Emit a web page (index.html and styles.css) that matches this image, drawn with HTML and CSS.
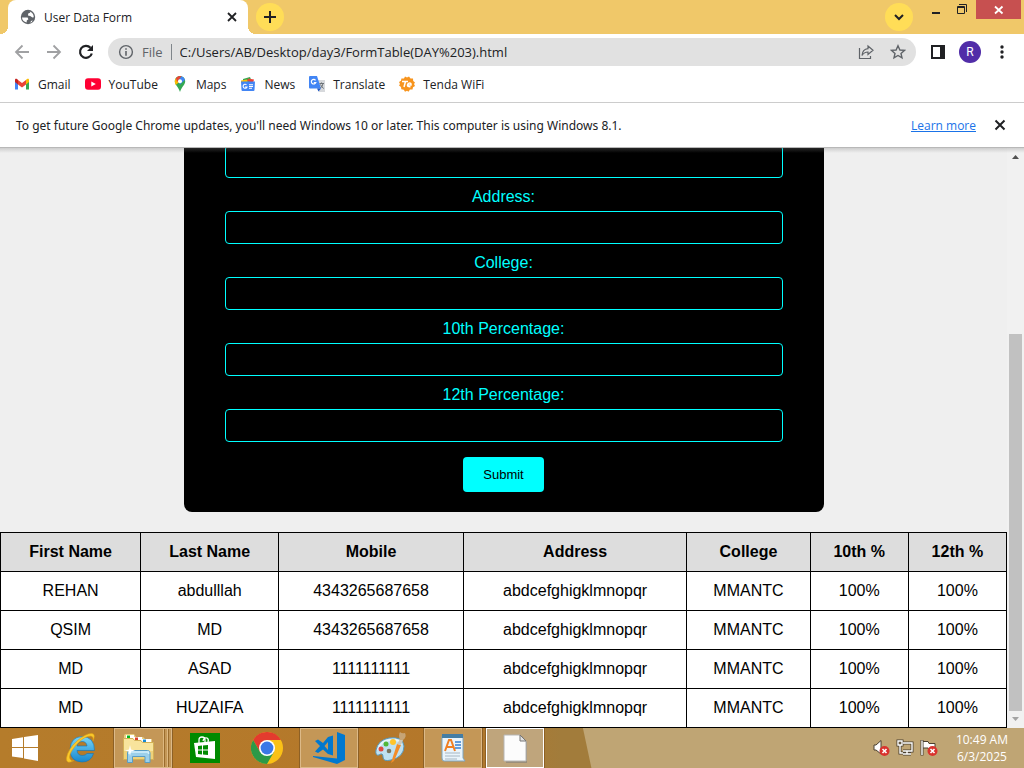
FILE: index.html
```html
<!DOCTYPE html>
<html lang="en">
<head>
<meta charset="utf-8">
<title>User Data Form</title>
<link rel="stylesheet" href="styles.css">
</head>
<body>
<div class="desktop">
  <header class="tabstrip">
    <div class="tab">
      <svg class="icon16" viewBox="0 0 16 16"><circle cx="8" cy="8" r="7.2" fill="#5f6368"/><path d="M2 8.6 7.6 8.4 8.4 10.2 6.8 11.4 6.6 13.4C4 13 2 11 2 8.6ZM8.6 2.4C10 2.4 10.6 3 10 3.8L8.2 4.6 8 6.4 10.2 7 12.4 8.6 13.8 8.2C13.8 5 11.6 2.4 8.6 2.4ZM9.8 13.4 12.4 11 12 13Z" fill="#fff"/></svg>
      <span class="tab-title">User Data Form</span>
      <button class="bare" type="button" aria-label="Close tab"><svg class="icon16" viewBox="0 0 16 16"><path d="M4 4 12 12M12 4 4 12" stroke="#202124" stroke-width="1.8"/></svg></button>
    </div>
    <button class="round" type="button" aria-label="New tab"><svg class="icon16" viewBox="0 0 16 16"><path d="M8 2V14M2 8H14" stroke="#202124" stroke-width="2"/></svg></button>
    <div class="window-controls">
      <button class="round tab-search" type="button" aria-label="Search tabs"><svg class="icon16" viewBox="0 0 16 16"><path d="M4 6 8 10 12 6" fill="none" stroke="#202124" stroke-width="2"/></svg></button>
      <button class="bare win" type="button" aria-label="Minimize"><svg width="12" height="12" viewBox="0 0 12 12"><path d="M2 9H10" stroke="#202124" stroke-width="2"/></svg></button>
      <button class="bare win" type="button" aria-label="Restore"><svg width="12" height="12" viewBox="0 0 12 12"><path d="M3 .5H10.500V8" fill="none" stroke="#202124"/><path d="M1.500 2.500H8.500V9.500H1.500ZM1.500 3.500H8.500" fill="none" stroke="#202124"/></svg></button>
      <button class="bare win-close" type="button" aria-label="Close"><svg width="12" height="12" viewBox="0 0 12 12"><path d="M2 2.500 9.500 9.500M9.500 2.500 2 9.500" stroke="#fff" stroke-width="1.800"/></svg></button>
    </div>
  </header>

  <div class="toolbar">
    <button class="bare" type="button" aria-label="Back"><svg class="icon16" viewBox="0 0 16 16"><path d="M15 8H2M8.500 1.500 2 8 8.500 14.500" fill="none" stroke="#a0a1a3" stroke-width="1.800"/></svg></button>
    <button class="bare" type="button" aria-label="Forward"><svg class="icon16" viewBox="0 0 16 16"><path d="M1 8H14M7.500 1.500 14 8 7.500 14.500" fill="none" stroke="#a0a1a3" stroke-width="1.800"/></svg></button>
    <button class="bare" type="button" aria-label="Reload"><svg class="icon16" viewBox="0 0 16 16"><path d="M13.800 9.500A6 6 0 1 1 12.500 3.800" fill="none" stroke="#202124" stroke-width="2.200"/><path d="M15 1V7H9Z" fill="#202124"/></svg></button>
    <div class="omnibox">
      <svg class="icon16" viewBox="0 0 16 16"><circle cx="8" cy="8" r="6.400" fill="none" stroke="#5f6368" stroke-width="1.400"/><path d="M8 7V11.800M8 4.200V5.800" stroke="#5f6368" stroke-width="1.600"/></svg>
      <span class="scheme">File</span>
      <input class="url" type="text" aria-label="Address and search bar" value="C:/Users/AB/Desktop/day3/FormTable(DAY%203).html">
      <button class="bare" type="button" aria-label="Share"><svg class="icon16" viewBox="0 0 16 16"><path d="M1.500 4V14.500H12.500V12" fill="none" stroke="#5f6368" stroke-width="1.200"/><path d="M10 2 15 6.300 10 10.500V8C7.500 8 5.500 9 4 11.500 4.300 7.500 6 5 10 4.600Z" fill="none" stroke="#5f6368" stroke-width="1.200"/></svg></button>
      <button class="bare" type="button" aria-label="Bookmark"><svg class="icon16" viewBox="0 0 16 16"><path d="M8 1.800 9.900 6 14.400 6.400 11 9.400 12 13.900 8 11.500 4 13.900 5 9.400 1.600 6.400 6.100 6Z" fill="none" stroke="#5f6368" stroke-width="1.400"/></svg></button>
    </div>
    <div class="toolbar-end">
      <button class="bare" type="button" aria-label="Side panel"><svg class="icon16" viewBox="0 0 16 16"><path d="M1 1H15V15H1Z" fill="#202124"/><path d="M3 3H10V13H3Z" fill="#fff"/></svg></button>
      <button class="avatar" type="button">R</button>
      <button class="bare" type="button" aria-label="Menu"><svg class="icon16" viewBox="0 0 16 16"><g fill="#202124"><circle cx="8" cy="3" r="1.700"/><circle cx="8" cy="8" r="1.700"/><circle cx="8" cy="13" r="1.700"/></g></svg></button>
    </div>
  </div>

  <nav class="bookmarks">
    <a href="#"><svg class="icon16" viewBox="0 0 16 16"><path d="M1 3.500V13.500H4V6.500Z" fill="#4285f4"/><path d="M15 3.500V13.500H12V6.500Z" fill="#34a853"/><path d="M12 3.800 14 2.500Q15.300 3 15 4.500V6L12 8.400Z" fill="#fbbc04"/><path d="M4 3.800 2 2.500Q.700 3 1 4.500V6L4 8.400Z" fill="#c5221f"/><path d="M4 4 8 7 12 4V8.400L8 11.500 4 8.400Z" fill="#ea4335"/></svg>Gmail</a>
    <a href="#"><svg class="icon16" viewBox="0 0 16 16"><rect y="2.300" width="16" height="11.500" rx="3" fill="#ff0033"/><path d="M6.300 5.500V10.600L10.800 8Z" fill="#fff"/></svg>YouTube</a>
    <a href="#"><svg class="icon16" viewBox="0 0 16 16"><path d="M8 0C11 0 13.200 2.400 13.200 5.300 13.200 9 9.500 11 8 16 6.500 11 2.800 9 2.800 5.300 2.800 2.400 5 0 8 0Z" fill="#34a853"/><path d="M4.200 2 8 5.300 3.800 9Q2.700 7 2.800 5.300 2.800 3.500 4.200 2Z" fill="#fbbc04"/><path d="M4 1.900Q5.500 0 8 0L9.700.300 5 6Z" fill="#ea4335"/><path d="M9.500.200Q12 1 13 3.700L8 8.500 6 5Z" fill="#4285f4"/><circle cx="8" cy="5.300" r="2" fill="#fff"/></svg>Maps</a>
    <a href="#"><svg class="icon16" viewBox="0 0 16 16"><path d="M3 3 10 1 12 6H3Z" fill="#34a853"/><path d="M8 2.500 14 3.500 13 7 7 5Z" fill="#ea4335"/><path d="M1 4.500 7 3.500 8 7H1Z" fill="#fbbc04"/><path d="M1 5.500H15L14.500 14Q14.500 15 13.500 15H2.500Q1.500 15 1.500 14Z" fill="#4285f4"/><path d="M6.500 8.800A2 2 0 1 0 7 11H5M9 8.800H13M9 10.500H13M9 12.300H12" fill="none" stroke="#fff" stroke-width="1.100"/></svg>News</a>
    <a href="#"><svg class="icon16" viewBox="0 0 16 16"><path d="M6 4H16V16H10Z" fill="#d7d9dc"/><path d="M1 0H8L12 12.500H1Q0 12.500 0 11.500V1Q0 0 1 0Z" fill="#4285f4"/><path d="M8 12.500H12L9.500 15.500Z" fill="#1f57c4"/><path d="M6.500 4.300A2.300 2.300 0 1 0 6.800 6.500H4.800" fill="none" stroke="#fff" stroke-width="1.200"/><path d="M10.500 7.500H15M12.500 6.500V7.500M14 7.500Q13.500 10.500 11.500 12M11.500 8.500Q12.500 11 14.800 12.500" fill="none" stroke="#6b7177"/></svg>Translate</a>
    <a href="#"><svg class="icon16" viewBox="0 0 16 16"><path d="M6 .500 8 1.500 10 .500 11.500 2.500 14 2.500 14.200 5 16 6.500 15 8 16 10 14 11.300 13.500 13.500 11 13.500 9.500 15.800 8 14.800 6 15.800 4.800 13.700 2.300 13.300 2 11 0 9.500 1 8 0 6 2 4.800 2.400 2.500 5 2.500Z" fill="#f7941d"/><path d="M3 5.500H9M6.500 5.500 5 11M8.500 9H12Q12.300 7 10.600 7 8.800 7 8.500 9 8.300 11 11.500 10.800" fill="none" stroke="#fff" stroke-width="1.500"/></svg>Tenda WiFi</a>
  </nav>

  <aside class="infobar">
    <p>To get future Google Chrome updates, you'll need Windows 10 or later. This computer is using Windows 8.1.</p>
    <a href="#">Learn more</a>
    <button class="bare" type="button" aria-label="Dismiss"><svg class="icon16" viewBox="0 0 16 16"><path d="M3.500 3.500 12.500 12.500M12.500 3.500 3.500 12.500" stroke="#202124" stroke-width="2"/></svg></button>
  </aside>

  <div class="viewport">
    <main class="page">
      <form class="data-form">
        <input type="text" aria-label="Mobile">
        <label for="address">Address:</label>
        <input id="address" type="text">
        <label for="college">College:</label>
        <input id="college" type="text">
        <label for="tenth">10th Percentage:</label>
        <input id="tenth" type="text">
        <label for="twelfth">12th Percentage:</label>
        <input id="twelfth" type="text">
        <button class="submit" type="submit">Submit</button>
      </form>
      <table class="records">
        <thead>
          <tr><th>First Name</th><th>Last Name</th><th>Mobile</th><th>Address</th><th>College</th><th>10th %</th><th>12th %</th></tr>
        </thead>
        <tbody>
          <tr><td>REHAN</td><td>abdulllah</td><td>4343265687658</td><td>abdcefghigklmnopqr</td><td>MMANTC</td><td>100%</td><td>100%</td></tr>
          <tr><td>QSIM</td><td>MD</td><td>4343265687658</td><td>abdcefghigklmnopqr</td><td>MMANTC</td><td>100%</td><td>100%</td></tr>
          <tr><td>MD</td><td>ASAD</td><td>1111111111</td><td>abdcefghigklmnopqr</td><td>MMANTC</td><td>100%</td><td>100%</td></tr>
          <tr><td>MD</td><td>HUZAIFA</td><td>1111111111</td><td>abdcefghigklmnopqr</td><td>MMANTC</td><td>100%</td><td>100%</td></tr>
        </tbody>
      </table>
    </main>
    <div class="scrollbar">
      <svg width="17" height="17" viewBox="0 0 17 17"><path d="M5 11H12L8.500 7Z" fill="#505050"/></svg>
      <div class="track"><div class="thumb"></div></div>
      <svg width="17" height="17" viewBox="0 0 17 17"><path d="M5 6H12L8.500 10Z" fill="#a3a3a3"/></svg>
    </div>
  </div>

  <footer class="taskbar">
    <button class="start" type="button" aria-label="Start"><svg width="28" height="28" viewBox="0 0 28 28"><path d="M1 5 12 3.300V13H1ZM13 3.100 27 1V13H13ZM1 14H12V24L1 22.400ZM13 14H27V27L13 24.600Z" fill="#fff"/></svg></button>
    <button class="task" type="button" aria-label="Internet Explorer"><svg width="32" height="32" viewBox="0 0 32 32"><defs><linearGradient id="ie" x2="0" y2="1"><stop stop-color="#79d5f7"/><stop offset="1" stop-color="#1787ce"/></linearGradient></defs><path fill-rule="evenodd" d="M29.500 18.500H12Q12.500 23.500 17.500 23.500 20.500 23.500 22 21.500H28.500Q26 30 17 30 5 29.500 5 17.500 5.500 5 17 4.500 29.500 5 29.500 18.500ZM12 14H22Q21.500 9.500 17 9.500 12.700 9.700 12 14Z" fill="url(#ie)" stroke="#1374b5" stroke-width=".600"/><path d="M9 28.500Q1 33 1.500 26 3 17 12 9 21 1 27 1.500 31 2 28 9 29 4.500 26 4 20 4 13 11 4.500 20 4.500 25 5 29.500 9 28.500Z" fill="#fbc92b" stroke="#dc9f14" stroke-width=".600"/></svg></button>
    <button class="task open stacked" type="button" aria-label="File Explorer"><svg width="34" height="32" viewBox="0 0 34 32"><path d="M2 4Q2 2 4 2H12L14 5H21L23 7H30V14H2Z" fill="#e9cf80"/><path d="M4 3H12V7H4Z" fill="#fff"/><path d="M5 3.500H8V6H5Z" fill="#08b51c"/><path d="M12 5H20V9H12Z" fill="#fff"/><path d="M13 5.500H16V8H13Z" fill="#dd432c"/><path d="M20 7H29V11H20Z" fill="#fff"/><path d="M21 7.500H24V10H21Z" fill="#168bd3"/><path d="M1.500 6.500H11L12.500 8.500H19L20.500 10.500H31.500V27.500H1.500Z" fill="#f8e49c" stroke="#d3b055"/><path d="M2 19H31V27H2Z" fill="#efd27a"/><path d="M5.500 30.500V21Q5.500 18.500 8 18.500H25.500Q28 18.500 28 21V30.500H23V24.500H10.500V30.500Z" fill="#9cd0ea" stroke="#5a9dc4"/><path d="M7 22V20H26.500V22" fill="none" stroke="#d3effb" stroke-width="1.500"/><path d="M8 13 9 17.500 13 18.500 9 19.500 8 24 7 19.500 3 18.500 7 17.500Z" fill="#fff"/></svg></button>
    <button class="task" type="button" aria-label="Store"><svg width="30" height="30" viewBox="0 0 30 30"><path d="M0 0H30V30H0Z" fill="#008a00"/><path d="M9 10V7Q9 4 12 4 15 4 15 7V9M13 8Q14 4 17 5 19 6 18 9" fill="none" stroke="#fff" stroke-width="1.300"/><path d="M4 10 25 8V26L6 24Z" fill="#fff"/><path d="M8 13 12 12.500V16.500H8ZM13 12.400 18 12V16.500H13ZM8 17.500H12V21.500L8 21ZM13 17.500H18V22L13 21.500Z" fill="#008a00"/></svg></button>
    <button class="task" type="button" aria-label="Google Chrome"><svg width="32" height="32" viewBox="0 0 32 32"><circle cx="16" cy="16" r="16" fill="#fbc116"/><path d="M2.140 8A16 16 0 0 1 29.860 8H16L9.070 20Z" fill="#e33b2e"/><path d="M2.140 8A16 16 0 0 0 16 32L22.930 20H16L9.070 20Z" fill="#2c9948"/><circle cx="16" cy="16" r="8" fill="#fff"/><circle cx="16" cy="16" r="6.400" fill="#3b78e7"/></svg></button>
    <button class="task open" type="button" aria-label="Visual Studio Code"><svg width="32" height="32" viewBox="0 0 32 32"><path d="M24 0 32 3V28L24 32 0 25V24L24 26.500Z" fill="#0078cf"/><path fill-rule="evenodd" d="M15 5 20 3.500V23.500L15 22 10 17.500 5 21 2 19.500 7 14 2 9 5 7.500 10 11ZM15 10 11.500 14 15 18Z" fill="#0078cf"/></svg></button>
    <button class="task" type="button" aria-label="Paint"><svg width="32" height="32" viewBox="0 0 32 32"><path d="M14 6Q28 4 29 14 29 25 16 28 8 30 8 25 8 20 4 23 0 24 1 18 3 8 14 6Z" fill="#bfe1f1" stroke="#5997b8"/><path d="M3 18Q5 9 15 8 25 7 26 13" fill="none" stroke="#e6f5fb" stroke-width="2"/><circle cx="14" cy="19" r="2.300" fill="#78745f"/><circle cx="6" cy="17" r="2.500" fill="#e24a40"/><circle cx="11" cy="12" r="2.500" fill="#51b83a"/><circle cx="18" cy="10" r="3" fill="#ffc42b"/><path d="M22 12 26 13 19 29 16 31Z" fill="#f28c28"/><path d="M22 12 25 7 28 8 26 13Z" fill="#cac8bd"/><path d="M25 8Q23 3 25 0 27 2 30 1 32 5 28 8Z" fill="#c6a476"/></svg></button>
    <button class="task open" type="button" aria-label="WordPad"><svg width="26" height="30" viewBox="0 0 26 30"><path d="M2 3H23V25L25 28H4Q2 28 2 25Z" fill="#eaf4fb" stroke="#7ca6c2"/><path d="M2 1H23V5H2Z" fill="#447da4"/><path d="M5 18 9 7H11L15 18M7 14H13" fill="none" stroke="#f07f22" stroke-width="2"/><path d="M15 9H21M15 12H21M15 15H21" stroke="#377fd0" stroke-width="1.500"/><path d="M5 20H20M5 23H20M5 26H17" stroke="#a6b6c3"/></svg></button>
    <button class="task open active" type="button" aria-label="Document"><svg width="26" height="30" viewBox="0 0 26 30"><path d="M4 3H20L25 9V30H4Z" fill="#777" opacity=".500"/><path d="M2 2H18L24 8V28H2Z" fill="#fcfcfc" stroke="#b5b5b5"/><path d="M18 2V8H24Z" fill="#e0e0e0" stroke="#777"/></svg></button>
    <div class="tray">
      <svg width="18" height="18" viewBox="0 0 18 18"><path d="M2 6H4L9 1.500V15L4 11H2Z" fill="#fff" stroke="#4b4030"/><circle cx="12.500" cy="12" r="5" fill="#d9332e"/><path d="M10.500 10 14.500 14M14.500 10 10.500 14" stroke="#fff" stroke-width="1.600"/></svg>
      <svg width="18" height="18" viewBox="0 0 18 18"><path d="M7 4H16V12H7M11 12V15M7 15H15M2 2H6V6H2ZM4 6V14H7" fill="none" stroke="#4b4030" stroke-width="3"/><path d="M7 4H16V12H7M11 12V15M7 15H15M2 2H6V6H2ZM4 6V14H7" fill="none" stroke="#fff" stroke-width="1.400"/></svg>
      <svg width="18" height="18" viewBox="0 0 18 18"><path d="M2 1V16.500" stroke="#4b4030" stroke-width="3"/><path d="M3 2.500H8L9 4.500H15V11H9L8 9H3Z" fill="#fff" stroke="#4b4030"/><path d="M2 1.500V16" stroke="#fff" stroke-width="1.400"/><circle cx="12.500" cy="12" r="5" fill="#d9332e"/><path d="M10.500 10 14.500 14M14.500 10 10.500 14" stroke="#fff" stroke-width="1.600"/></svg>
      <div class="clock"><span>10:49 AM</span><span>6/3/2025</span></div>
    </div>
  </footer>
</div>
</body>
</html>
```

FILE: styles.css
```css
* { box-sizing: border-box; }

body {
  margin: 0;
  font-family: "Open Sans", "Noto Sans", sans-serif;
  font-size: 12px;
  color: #202124;
}

button, input { font: inherit; color: inherit; }

svg { display: block; flex: none; }

.icon16 { width: 16px; height: 16px; }

.desktop {
  display: flex;
  flex-direction: column;
  height: 100vh;
  overflow: hidden;
  background: #fff;
}

.bare {
  display: flex;
  align-items: center;
  justify-content: center;
  padding: 0;
  border: 0;
  background: none;
}

/* Tab strip */
.tabstrip {
  display: flex;
  flex: none;
  height: 34px;
  padding-left: 8px;
  background: #f0c869;
}

.tab {
  position: relative;
  display: flex;
  align-items: center;
  width: 240px;
  padding: 0 8px 0 12px;
  border-radius: 8px 8px 0 0;
  background: #fff;
}

.tab::before, .tab::after {
  content: "";
  position: absolute;
  bottom: 0;
  width: 8px;
  height: 8px;
}

.tab::before {
  right: 100%;
  background: radial-gradient(circle at 0 0, transparent 8px, #fff 8px);
}

.tab::after {
  left: 100%;
  background: radial-gradient(circle at 100% 0, transparent 8px, #fff 8px);
}

.tab-title { flex: 1; padding-left: 8px; }

.round {
  display: flex;
  align-items: center;
  justify-content: center;
  width: 28px;
  height: 28px;
  margin: 3px 0 0 8px;
  padding: 0;
  border: 0;
  border-radius: 50%;
  background: #ffdd57;
}

.window-controls {
  display: flex;
  align-items: flex-start;
  margin-left: auto;
  padding-right: 3px;
}

.tab-search { margin-right: 10px; }

.win { width: 26px; height: 19px; }

.win-close {
  width: 45px;
  height: 19px;
  margin-left: 1px;
  background: #c75050;
}

/* Toolbar */
.toolbar {
  display: flex;
  flex: none;
  align-items: center;
  gap: 16px;
  height: 36px;
  padding: 0 14px;
}

.omnibox {
  display: flex;
  flex: 1;
  align-items: center;
  gap: 16px;
  height: 28px;
  margin: 0 -2px;
  padding: 0 10px;
  border-radius: 14px;
  background: #e1e1e1;
}

.scheme {
  margin-left: -8px;
  padding-right: 8px;
  border-right: 1px solid #80868b;
  color: #5f6368;
  font-size: 13px;
  line-height: 16px;
}

.url {
  flex: 1;
  min-width: 0;
  margin-left: -8px;
  padding: 0;
  border: 0;
  background: none;
  font-size: 13px;
}

.toolbar-end { display: flex; align-items: center; gap: 13px; }

.avatar {
  width: 22px;
  height: 22px;
  padding: 0;
  border: 0;
  border-radius: 50%;
  background: #512da8;
  color: #fff;
  font-family: Roboto, sans-serif;
}

/* Bookmarks */
.bookmarks {
  display: flex;
  flex: none;
  align-items: center;
  gap: 14px;
  height: 33px;
  padding: 0 14px 4px;
  border-bottom: 1px solid #ccc;
}

.bookmarks a {
  display: flex;
  align-items: center;
  gap: 8px;
  color: inherit;
  text-decoration: none;
}

/* Update notice */
.infobar {
  display: flex;
  flex: none;
  align-items: center;
  gap: 16px;
  height: 45px;
  padding: 0 16px;
  border-bottom: 1px solid #b8b8b8;
}

.infobar p {
  flex: 1;
  margin: 0;
  font-family: "Noto Sans", "Open Sans", sans-serif;
}

.infobar a { color: #1a73e8; }

/* Web page */
.viewport {
  position: relative;
  display: flex;
  flex: 1;
  min-height: 0;
  overflow: hidden;
  background: #efefef;
}

.viewport::before {
  content: "";
  position: absolute;
  inset: 0 0 auto;
  height: 5px;
  background: linear-gradient(rgba(128, 128, 128, 0.3), transparent);
}

.page {
  display: flex;
  flex: 1;
  flex-direction: column;
  align-items: center;
  justify-content: flex-end;
  gap: 20px;
  font-family: "Liberation Sans", Arial, sans-serif;
  font-size: 16px;
  color: #000;
}

.data-form {
  display: flex;
  flex-direction: column;
  width: 100%;
  max-width: 640px;
  padding: 20px 41px;
  border-radius: 8px;
  background: #000;
  color: #0ff;
  text-align: center;
}

.data-form label { padding: 10px 0 5px; line-height: 18px; }

.data-form input {
  height: 33px;
  padding: 8px;
  border: 1px solid #0ff;
  border-radius: 4px;
  background: #000;
  font-size: 13px;
}

.submit {
  align-self: center;
  margin-top: 15px;
  padding: 10px 20px;
  border: 0;
  border-radius: 4px;
  background: #0ff;
  color: #000;
  font-size: 13px;
}

.records {
  width: 100%;
  border-collapse: collapse;
  background: #fff;
  text-align: center;
  line-height: 18px;
}

.records th, .records td { padding: 10px; border: 1px solid #000; }

.records th { background: #ddd; }

/* Scrollbar */
.scrollbar {
  display: flex;
  flex: none;
  flex-direction: column;
  width: 17px;
  background: #f1f1f1;
}

.track {
  display: flex;
  flex: 1;
  align-items: flex-end;
  padding: 0 2px;
}

.thumb { flex: 1; height: 69%; background: #c1c1c1; }

/* Taskbar */
.taskbar {
  display: flex;
  flex: none;
  gap: 4px;
  height: 40px;
  background:
    linear-gradient(78deg, transparent 578px, #bfa574 579px),
    linear-gradient(90deg, #b57c2b, #b4772a 460px, #a27c3b 560px);
}

.start, .task {
  display: flex;
  align-items: center;
  justify-content: center;
  padding: 0;
  border: 1px solid transparent;
  background: none;
}

.start { width: 48px; padding-left: 2px; }

.task { width: 58px; }

.open {
  border-color: #dcb988;
  outline: 1px solid #8d6025;
  background: #c49757;
}

.stacked {
  padding-right: 8px;
  background: linear-gradient(90deg, #c49757 48px, #deb880 48px 49px, #9b6c2d 49px 50px, #c49757 50px 52px, #deb880 52px 53px, #9b6c2d 53px 54px, #c49757 54px);
}

.active {
  border-color: #fff;
  background: #bfa57c;
}

.tray {
  display: flex;
  align-items: center;
  gap: 6px;
  margin-left: auto;
  padding-right: 16px;
  color: #fff;
}

.clock {
  display: flex;
  flex-direction: column;
  align-items: center;
  padding-left: 12px;
  line-height: 17px;
}
```
